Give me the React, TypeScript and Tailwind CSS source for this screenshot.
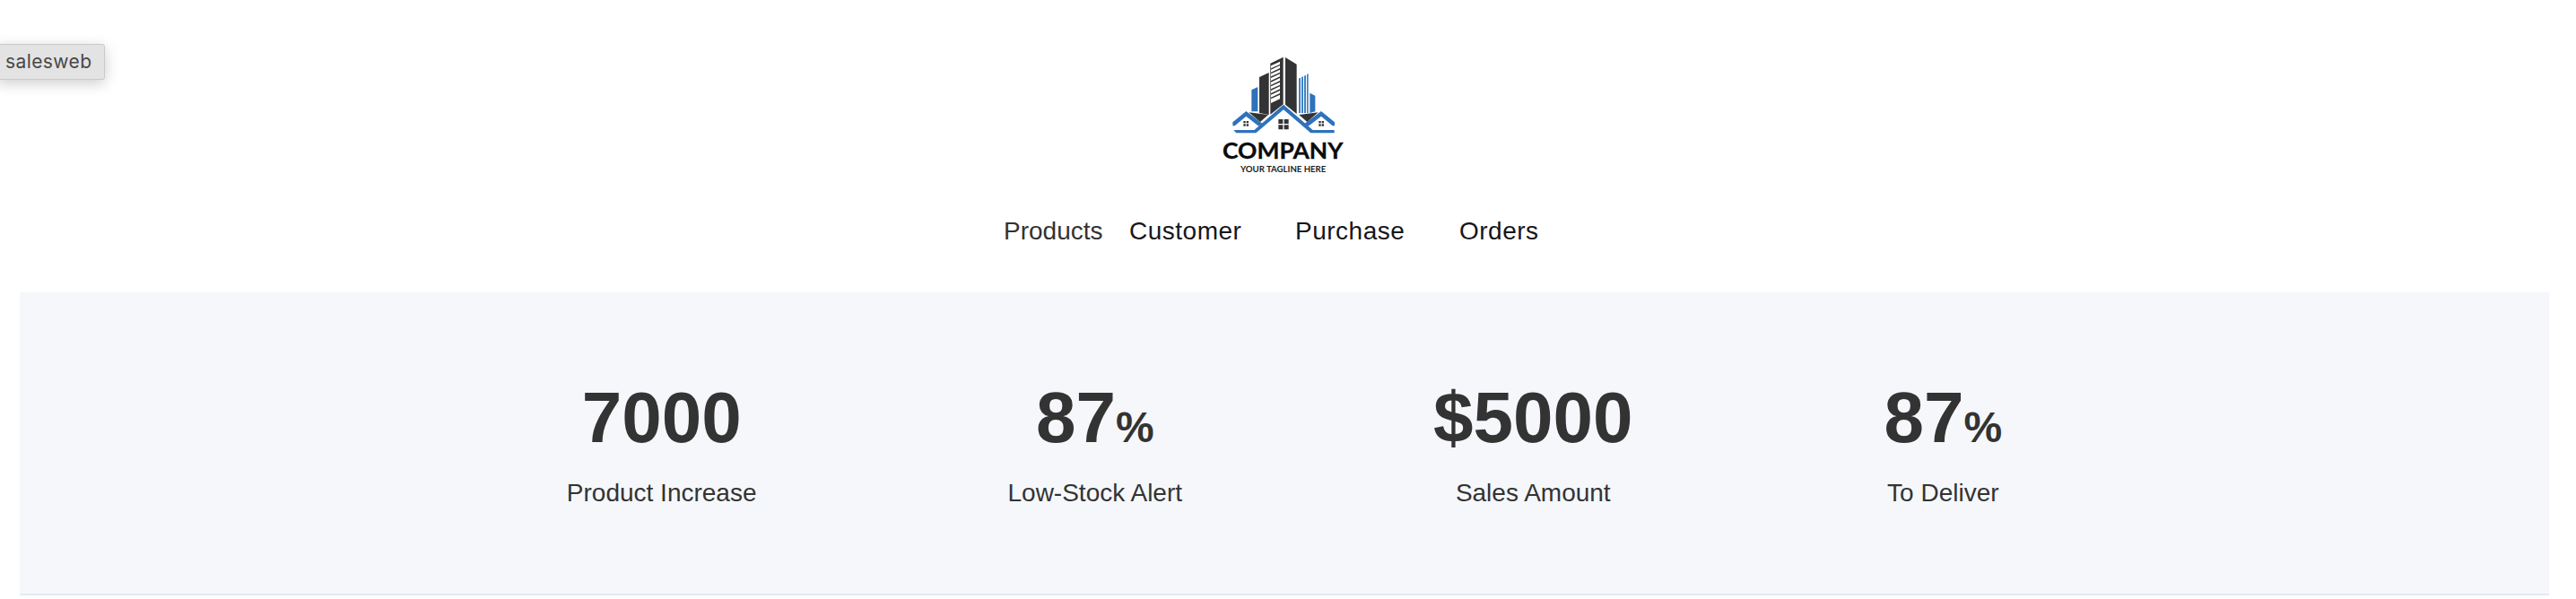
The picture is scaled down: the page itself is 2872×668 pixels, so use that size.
import React from "react";

function Logo() {
  return (
    <svg className="h-[160px] w-[180px]" viewBox="0 0 540 480" role="img" aria-label="Company">
      <path d="M166 151L187 141V223H166Z" fill="#2f72bb" />
      <path d="M192 108L224 93V234L192 228Z" fill="#333335" />
      <path d="M229 62L272 41V199L229 233Z" fill="#333335" />
      <path
        d="M231 70L261 56V65L231 79ZM231 83L261 69V78L231 92ZM231 97L261 83V92L231 106ZM231 111L261 97V106L231 120ZM231 125L261 111V120L231 134ZM231 139L261 125V134L231 148ZM231 153L261 139V148L231 162ZM231 167L261 153V162L231 176ZM231 181L261 167V181L231 195Z"
        fill="#fff"
      />
      <path d="M279 42L317 65V231L279 200Z" fill="#333335" />
      <path
        d="M324 112L330 110V228H324ZM333 108L339 106V228H333ZM342 104L348 101V228H342ZM351 99L356 96V228H351Z"
        fill="#3f83c5"
      />
      <path d="M361 161L379 170V223L361 228Z" fill="#2f72bb" />
      <path d="M157 226L222 234L195 258Z" fill="#333335" />
      <path d="M389 226L325 234L352 258Z" fill="#333335" />
      <path d="M103 259L148 222L202 263L190 272L148 239L110 271H103Z" fill="#2f72bb" />
      <path d="M444 259L399 222L344 263L356 272L399 239L437 271H444Z" fill="#2f72bb" />
      <path d="M106 285H175L273 200L371 285H443V295H364L273 217L181 295H115Z" fill="#2f72bb" />
      <path
        d="M256 249H271V264H256ZM275 249H290V264H275ZM256 268H271V283H256ZM275 268H290V283H275Z"
        fill="#333335"
      />
      <path
        d="M139 255H146V262H139ZM149 255H156V262H149ZM139 265H146V272H139ZM149 265H156V272H149ZM391 255H398V262H391ZM401 255H408V262H401ZM391 265H398V272H391ZM401 265H408V272H401Z"
        fill="#333335"
      />
      <text x="69" y="382" textLength="403" lengthAdjust="spacingAndGlyphs" className="fill-[#0b0b0b] stroke-[#0b0b0b] stroke-1 font-['Lato',sans-serif] text-[76px] font-bold">
        COMPANY
      </text>
      <text x="129" y="427" textLength="286" lengthAdjust="spacingAndGlyphs" className="fill-[#1c1c1c] font-['Lato',sans-serif] text-[29px] font-bold">
        YOUR TAGLINE HERE
      </text>
    </svg>
  );
}

const stats = [
  { value: "7000", unit: "", label: "Product Increase" },
  { value: "87", unit: "%", label: "Low-Stock Alert" },
  { value: "$5000", unit: "", label: "Sales Amount" },
  { value: "87", unit: "%", label: "To Deliver" },
];

export default function App() {
  return (
    <div className="relative flex h-[668px] flex-col overflow-hidden bg-white font-['Liberation_Sans',Arial,sans-serif] text-[#333]">
      <div className="absolute -left-1 top-[49px] flex h-[40px] w-[121px] items-center rounded-[3px] border border-[#c9c9c9] bg-[#e3e3e3] pl-[9px] font-['Inter',sans-serif] text-[21px] tracking-[0.4px] text-[#484848] shadow-[0_4px_16px_rgba(0,0,0,0.2)]">
        salesweb
      </div>
      <header className="flex h-[326px] shrink-0 flex-col pt-[50px]">
        <div className="ml-[1340px] h-[160px]">
          <Logo />
        </div>
        <nav className="ml-[1119px] mt-[32px] flex text-[28px] leading-8 text-[#16161a]">
          <a className="w-[140px] text-[#333]">Products</a>
          <a className="w-[185px] tracking-[0.5px]">Customer</a>
          <a className="w-[183px] tracking-[0.5px]">Purchase</a>
          <a className="tracking-[0.5px]">Orders</a>
        </nav>
      </header>
      <section className="ml-[22px] mr-[30px] flex h-[338px] shrink-0 justify-center gap-[280px] border-b-2 border-[#e3e9f3] bg-[#f5f7fb] pt-[94px]">
        {stats.map((stat) => (
          <div key={stat.label} className="flex flex-col items-center whitespace-nowrap">
            <div className="h-[92px] text-[80px] font-bold leading-[92px]">
              {stat.value}
              {stat.unit && <span className="text-[48px] leading-none">{stat.unit}</span>}
            </div>
            <div className="mt-[22px] text-[28px] leading-8">{stat.label}</div>
          </div>
        ))}
      </section>
    </div>
  );
}
